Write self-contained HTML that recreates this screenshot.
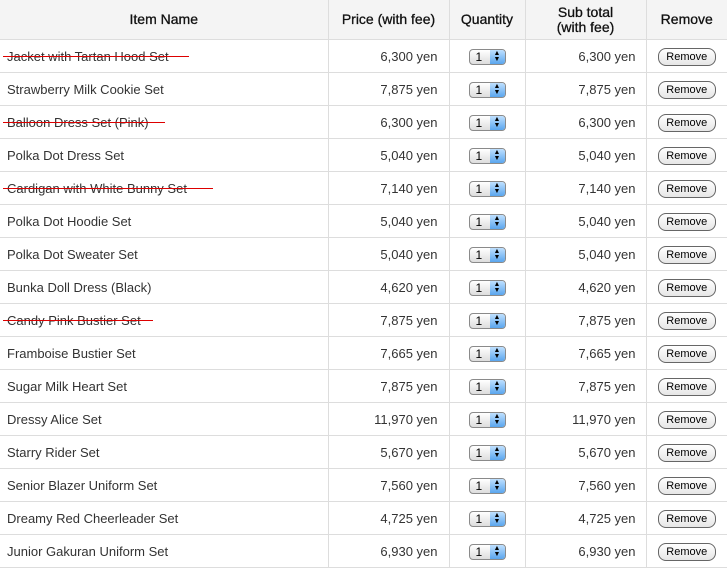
<!DOCTYPE html>
<html><head><meta charset="utf-8"><style>
body{margin:0;background:#fff;font-family:"Liberation Sans",Arial,sans-serif;font-size:13px;color:#333;width:728px;height:568px;overflow:hidden}
table{border-collapse:collapse;position:absolute;left:0;top:0;width:727px;table-layout:fixed}
th{background:#f4f4f4;font-weight:normal;font-size:14px;color:#111;height:39px;padding:0;border-right:1px solid #ddd;border-bottom:1px solid #ddd;line-height:15px;-webkit-text-stroke:0.3px #111}
td{height:32px;padding:0;border-right:1px solid #ddd;border-bottom:1px solid #ddd;position:relative}
th:last-child,td:last-child{border-right:none}
td.n{padding-left:7px}
td.p{text-align:right;padding-right:11px}
td.s{text-align:right;padding-right:10px}
.st{text-decoration:line-through;position:relative}
.rl{position:absolute;left:3px;top:16px;height:1px;background:#d00}
.sel{display:inline-block;width:37px;height:16px;border:1px solid #8a8a8a;border-radius:4px;background:linear-gradient(#fff,#ddd);position:relative;top:1px;vertical-align:middle;font-size:12px;line-height:14px;text-align:left;box-sizing:border-box;padding-left:6px;color:#000}
.sel i{position:absolute;right:0;top:0;width:15px;height:13px;background:linear-gradient(#bfe0ff,#5aa6ee);border-radius:0 3px 3px 0;font-style:normal;font-size:7px;line-height:6px;text-align:center;padding-top:1px}
.btn{display:inline-block;width:56px;height:16px;border:1px solid #666;border-radius:8px;background:linear-gradient(#fff,#e6e6e6);font-size:11px;line-height:16px;text-align:center;color:#000;vertical-align:middle;position:relative;top:1px}
td.q,td.r{text-align:center}
</style></head><body>
<table>
<colgroup><col style="width:328px"><col style="width:121px"><col style="width:76px"><col style="width:121px"><col style="width:81px"></colgroup>
<tr><th>Item Name</th><th>Price (with fee)</th><th>Quantity</th><th>Sub total<br>(with fee)</th><th>Remove</th></tr>
<tr><td class="n"><span class="st">Jacket with Tartan Hood Set</span><span class="rl" style="width:186px"></span></td><td class="p">6,300 yen</td><td class="q"><span class="sel">1<i>▲<br>▼</i></span></td><td class="s">6,300 yen</td><td class="r"><span class="btn">Remove</span></td></tr>
<tr><td class="n">Strawberry Milk Cookie Set</td><td class="p">7,875 yen</td><td class="q"><span class="sel">1<i>▲<br>▼</i></span></td><td class="s">7,875 yen</td><td class="r"><span class="btn">Remove</span></td></tr>
<tr><td class="n"><span class="st">Balloon Dress Set (Pink)</span><span class="rl" style="width:162px"></span></td><td class="p">6,300 yen</td><td class="q"><span class="sel">1<i>▲<br>▼</i></span></td><td class="s">6,300 yen</td><td class="r"><span class="btn">Remove</span></td></tr>
<tr><td class="n">Polka Dot Dress Set</td><td class="p">5,040 yen</td><td class="q"><span class="sel">1<i>▲<br>▼</i></span></td><td class="s">5,040 yen</td><td class="r"><span class="btn">Remove</span></td></tr>
<tr><td class="n"><span class="st">Cardigan with White Bunny Set</span><span class="rl" style="width:210px"></span></td><td class="p">7,140 yen</td><td class="q"><span class="sel">1<i>▲<br>▼</i></span></td><td class="s">7,140 yen</td><td class="r"><span class="btn">Remove</span></td></tr>
<tr><td class="n">Polka Dot Hoodie Set</td><td class="p">5,040 yen</td><td class="q"><span class="sel">1<i>▲<br>▼</i></span></td><td class="s">5,040 yen</td><td class="r"><span class="btn">Remove</span></td></tr>
<tr><td class="n">Polka Dot Sweater Set</td><td class="p">5,040 yen</td><td class="q"><span class="sel">1<i>▲<br>▼</i></span></td><td class="s">5,040 yen</td><td class="r"><span class="btn">Remove</span></td></tr>
<tr><td class="n">Bunka Doll Dress (Black)</td><td class="p">4,620 yen</td><td class="q"><span class="sel">1<i>▲<br>▼</i></span></td><td class="s">4,620 yen</td><td class="r"><span class="btn">Remove</span></td></tr>
<tr><td class="n"><span class="st">Candy Pink Bustier Set</span><span class="rl" style="width:150px"></span></td><td class="p">7,875 yen</td><td class="q"><span class="sel">1<i>▲<br>▼</i></span></td><td class="s">7,875 yen</td><td class="r"><span class="btn">Remove</span></td></tr>
<tr><td class="n">Framboise Bustier Set</td><td class="p">7,665 yen</td><td class="q"><span class="sel">1<i>▲<br>▼</i></span></td><td class="s">7,665 yen</td><td class="r"><span class="btn">Remove</span></td></tr>
<tr><td class="n">Sugar Milk Heart Set</td><td class="p">7,875 yen</td><td class="q"><span class="sel">1<i>▲<br>▼</i></span></td><td class="s">7,875 yen</td><td class="r"><span class="btn">Remove</span></td></tr>
<tr><td class="n">Dressy Alice Set</td><td class="p">11,970 yen</td><td class="q"><span class="sel">1<i>▲<br>▼</i></span></td><td class="s">11,970 yen</td><td class="r"><span class="btn">Remove</span></td></tr>
<tr><td class="n">Starry Rider Set</td><td class="p">5,670 yen</td><td class="q"><span class="sel">1<i>▲<br>▼</i></span></td><td class="s">5,670 yen</td><td class="r"><span class="btn">Remove</span></td></tr>
<tr><td class="n">Senior Blazer Uniform Set</td><td class="p">7,560 yen</td><td class="q"><span class="sel">1<i>▲<br>▼</i></span></td><td class="s">7,560 yen</td><td class="r"><span class="btn">Remove</span></td></tr>
<tr><td class="n">Dreamy Red Cheerleader Set</td><td class="p">4,725 yen</td><td class="q"><span class="sel">1<i>▲<br>▼</i></span></td><td class="s">4,725 yen</td><td class="r"><span class="btn">Remove</span></td></tr>
<tr><td class="n">Junior Gakuran Uniform Set</td><td class="p">6,930 yen</td><td class="q"><span class="sel">1<i>▲<br>▼</i></span></td><td class="s">6,930 yen</td><td class="r"><span class="btn">Remove</span></td></tr>
</table>
</body></html>
